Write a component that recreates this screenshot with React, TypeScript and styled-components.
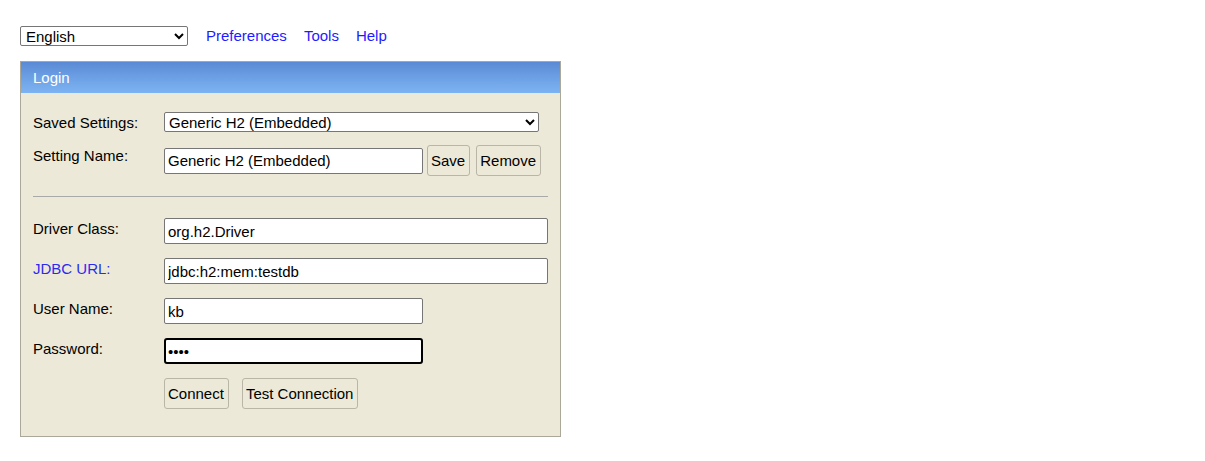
import React, { useState } from 'react';
import styled, { createGlobalStyle } from 'styled-components';

const GlobalStyle = createGlobalStyle`
  html, body {
    margin: 0;
    padding: 0;
    background: #ffffff;
  }
  body {
    font-family: "Liberation Sans", Arial, sans-serif;
    font-size: 15px;
    color: #000;
  }
`;

const Page = styled.div`
  padding: 26px 0 0 20px;
  display: flex;
  flex-direction: column;
  align-items: flex-start;
`;

const TopBar = styled.div`
  display: flex;
  align-items: flex-start;
  height: 20px;
  margin-bottom: 15px;
`;

const LangSelect = styled.select`
  width: 168px;
  height: 20px;
  box-sizing: border-box;
  border: 1px solid #767676;
  border-radius: 2px;
  background: #fff;
  font: 15px "Liberation Sans", Arial, sans-serif;
  padding: 0 0 0 1px;
  margin-right: 18px;
  color: #000;
`;

const NavLink = styled.a`
  color: #1c1cff;
  text-decoration: none;
  margin-right: 17px;
  font-size: 15px;
  line-height: 19px;
  cursor: pointer;
`;

const Panel = styled.div`
  width: 541px;
  box-sizing: border-box;
  border: 1px solid #aca899;
  background: #ece9d8;
`;

const PanelHeader = styled.div`
  height: 31px;
  display: flex;
  align-items: center;
  padding-left: 12px;
  color: #fff;
  font-size: 15px;
  background: linear-gradient(to bottom, #5a8ad4 0%, #6ea2e6 55%, #7db3f2 100%);
`;

const PanelBody = styled.div`
  padding: 19px 12px 27px 12px;
  display: flex;
  flex-direction: column;
`;

const Row = styled.div<{ $gap?: number }>`
  display: grid;
  grid-template-columns: 131px 1fr;
  align-items: start;
  margin-top: ${(p) => p.$gap ?? 14}px;
`;

const Label = styled.div<{ $link?: boolean }>`
  padding-top: 2px;
  line-height: 17px;
  color: ${(p) => (p.$link ? '#2b2bf0' : '#000')};
`;

const Controls = styled.div`
  display: flex;
  align-items: center;
`;

const Select = styled.select`
  width: 375px;
  height: 20px;
  box-sizing: border-box;
  border: 1px solid #767676;
  border-radius: 2px;
  background: #fff;
  font: 15px "Liberation Sans", Arial, sans-serif;
  padding: 0;
  color: #000;
`;

const TextInput = styled.input<{ $w: number }>`
  width: ${(p) => p.$w}px;
  height: 26px;
  box-sizing: border-box;
  border: 1px solid #767676;
  border-radius: 2px;
  background: #fff;
  font: 15px "Liberation Sans", Arial, sans-serif;
  padding: 0 3px;
  color: #000;
  outline: none;
`;

const PasswordInput = styled(TextInput)`
  border: 2px solid #000;
  border-radius: 3px;
  padding: 0 2px;
  caret-color: #000;
`;

const Button = styled.button<{ $ml?: number }>`
  height: 31px;
  box-sizing: border-box;
  margin-left: ${(p) => p.$ml ?? 0}px;
  padding: 0 4px 0 3px;
  border: 1px solid #b9b6a8;
  border-radius: 3px;
  background: #ece9d8;
  font: 15px "Liberation Sans", Arial, sans-serif;
  color: #000;
  cursor: pointer;
`;

const Divider = styled.div`
  height: 1px;
  background: #a9a9a9;
  margin: 20px 0 21px 0;
`;

const Fields = styled.div`
  display: flex;
  flex-direction: column;
`;

const App: React.FC = () => {
  const [lang, setLang] = useState('en');
  const [setting, setSetting] = useState('h2emb');
  const [name, setName] = useState('Generic H2 (Embedded)');
  const [driver, setDriver] = useState('org.h2.Driver');
  const [url, setUrl] = useState('jdbc:h2:mem:testdb');
  const [user, setUser] = useState('kb');
  const [password, setPassword] = useState('test');

  return (
    <>
      <GlobalStyle />
      <Page>
        <TopBar>
          <LangSelect value={lang} onChange={(e) => setLang(e.target.value)}>
            <option value="en">English</option>
            <option value="de">Deutsch</option>
          </LangSelect>
          <NavLink>Preferences</NavLink>
          <NavLink>Tools</NavLink>
          <NavLink>Help</NavLink>
        </TopBar>

        <Panel>
          <PanelHeader>Login</PanelHeader>
          <PanelBody>
            <Row $gap={0}>
              <Label>Saved Settings:</Label>
              <Controls>
                <Select value={setting} onChange={(e) => setSetting(e.target.value)}>
                  <option value="h2emb">Generic H2 (Embedded)</option>
                  <option value="h2srv">Generic H2 (Server)</option>
                </Select>
              </Controls>
            </Row>
            <Row $gap={13}>
              <Label>Setting Name:</Label>
              <Controls>
                <TextInput $w={259} value={name} onChange={(e) => setName(e.target.value)} />
                <Button $ml={4}>Save</Button>
                <Button $ml={6}>Remove</Button>
              </Controls>
            </Row>

            <Divider />

            <Fields>
              <Row $gap={0}>
                <Label>Driver Class:</Label>
                <TextInput $w={384} value={driver} onChange={(e) => setDriver(e.target.value)} />
              </Row>
              <Row>
                <Label $link>JDBC URL:</Label>
                <TextInput $w={384} value={url} onChange={(e) => setUrl(e.target.value)} />
              </Row>
              <Row>
                <Label>User Name:</Label>
                <TextInput $w={259} value={user} onChange={(e) => setUser(e.target.value)} />
              </Row>
              <Row>
                <Label>Password:</Label>
                <PasswordInput
                  $w={259}
                  type="password"
                  value={password}
                  autoFocus
                  onChange={(e) => setPassword(e.target.value)}
                />
              </Row>
              <Row>
                <div />
                <Controls>
                  <Button>Connect</Button>
                  <Button $ml={13}>Test Connection</Button>
                </Controls>
              </Row>
            </Fields>
          </PanelBody>
        </Panel>
      </Page>
    </>
  );
};

export default App;
